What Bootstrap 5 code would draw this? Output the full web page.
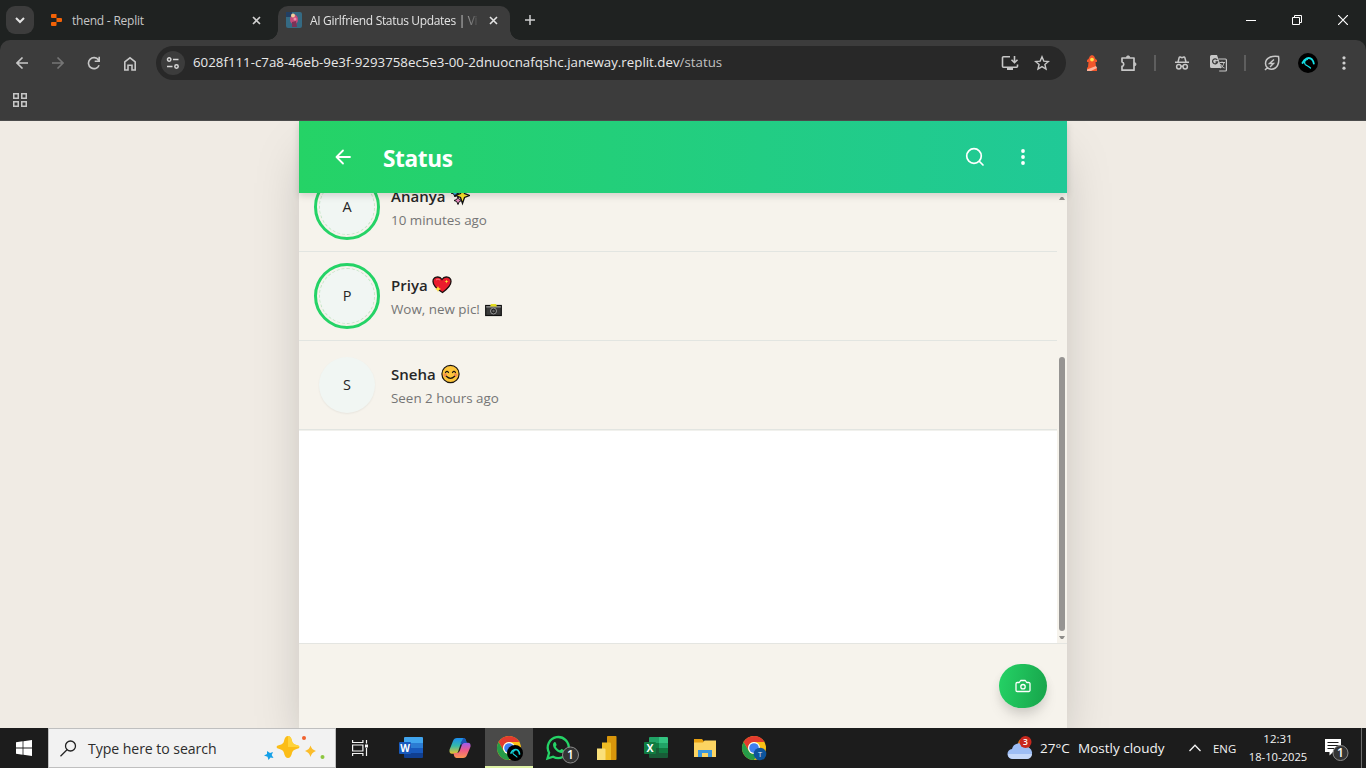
<!DOCTYPE html>
<html lang="en">
<head>
<meta charset="utf-8">
<meta name="viewport" content="width=device-width, initial-scale=1">
<title>AI Girlfriend Status Updates</title>
<link href="https://cdn.jsdelivr.net/npm/bootstrap@5.3.0/dist/css/bootstrap.min.css" rel="stylesheet">
<style>
body{font-family:"Open Sans","Noto Sans",sans-serif;height:768px;background:#f0ebe4;line-height:1}
svg{display:block;flex:none}
.desk{width:1366px;height:768px}
.txt{white-space:nowrap;flex:none}
/* browser chrome */
.tabs{height:40px;background:#1f2221;color:#c7c7c7;font-size:12px;letter-spacing:-.22px}
.tabs-menu{width:28px;height:28px;border-radius:9px;background:#3c3c3c;margin:6px 0 0 6px}
.tab-a{width:236px;height:40px;margin-left:8px;padding-left:9px}
.tab-a .txt{margin-left:9px;padding-top:2px}
.tab-b{width:232px;height:34px;margin-top:6px;padding-bottom:6px;border-radius:10px 10px 0 0;background:#3c3c3c;color:#e3e3e3;position:relative;letter-spacing:-.33px}
.tab-b::before,.tab-b::after{content:"";position:absolute;bottom:0;width:10px;height:10px}
.tab-b::before{left:-10px;background:radial-gradient(circle at 0 0,transparent 9.5px,#3c3c3c 10px)}
.tab-b::after{right:-10px;background:radial-gradient(circle at 100% 0,transparent 9.5px,#3c3c3c 10px)}
.tab-title{width:170px;line-height:18px;padding-top:1px;-webkit-mask-image:linear-gradient(90deg,#000 148px,transparent 170px);mask-image:linear-gradient(90deg,#000 148px,transparent 170px)}
.win{width:46px;height:40px}
.toolbox{background:#1f2221}
.tools{height:81px;background:#3c3c3c;border-radius:10px 10px 0 0;border-bottom:1px solid #4b4b4b;color:#c7c7c7}
.slot{width:36px;height:46px}
.slot-sep{width:18px;height:46px}
.slot-sep i{width:2px;height:16px;background:#5e5e5e}
.url{width:910px;height:34px;margin-top:6px;background:#282828;border-radius:17px;padding-left:5px;color:#e8e8e8}
.url .site{width:24px;height:24px;border-radius:50%;background:#3c3c3c}
.url .addr{font-size:13.3px;margin-left:8px}
/* page */
.stage{height:607px;overflow:hidden;background:#f0ebe4}
.phone{width:768px;height:607px;background:#f6f3ec;box-shadow:0 25px 50px -12px rgba(0,0,0,.25)}
.head{height:72px;background:linear-gradient(90deg,#25d366,#20c997);color:#fff;box-shadow:0 3px 7px rgba(0,0,0,.14);z-index:2;position:relative}
.head .ttl{font-size:22.6px;font-weight:700;margin-left:31px;padding-top:5px;letter-spacing:-.35px}
.feed{height:450px;overflow:hidden;background:#fff}
.person{height:89px;background:#f6f3ec;border-bottom:1px solid #e2e5e1;padding-left:15px}
.person-first{margin-top:-30px}
.person-last{box-shadow:0 1px 0 #f1f1ed}
.ring{width:66px;height:66px;border-radius:50%;border:3px solid transparent}
.ring-new{border-color:#25d366}
.face{width:56px;height:56px;border-radius:50%;background:#f1f6f3;color:#262626;font-size:14.5px;box-shadow:0 1px 2px rgba(0,0,0,.06)}
.ring-new .face{border:1px dashed #c6e6c8;box-shadow:none}
.pname{font-size:15px;font-weight:600;color:#262626;height:24px;padding-top:2px}
.psub{font-size:13.4px;color:#757575;height:24px;padding-top:4px}
.bar{width:10px;background:#f6f3ec}
.thumb{width:6px;height:274px;border-radius:3px;background:#969492}
.foot{height:85px;border-top:1px solid #e4e5e1;padding:20px 20px 0 0}
.fab{width:48px;height:44px;border-radius:24px;background:linear-gradient(100deg,#25d366,#17a34a);box-shadow:0 10px 15px -3px rgba(0,0,0,.12),0 4px 10px rgba(0,0,0,.07)}
/* taskbar */
.taskbar{height:40px;background:#1c1c1c;color:#f3f3f3}
.cell{width:48px;height:40px;margin-right:1px}
.cell-on{background:#4a4a49;border-bottom:2px solid #dff2a6}
.find{width:288px;height:40px;background:#f2f2f2;border:1px solid #bfbfbf;color:#2d2d2d;font-size:14.1px}
.find .txt,.tray>.txt{padding-top:2px}
</style>
</head>
<body>
<div class="desk d-flex flex-column overflow-hidden">

<div class="tabs d-flex">
  <div class="tabs-menu d-flex align-items-center justify-content-center flex-shrink-0"><svg width="10" height="7" fill="none" stroke="#e3e3e3" stroke-width="2"><path d="M1 1l4 4 4-4"/></svg></div>
  <div class="tab-a d-flex align-items-center">
    <svg width="12" height="12" fill="#f26207"><path d="M1 0h4.500v4H1a1 1 0 0 1-1-1V1a1 1 0 0 1 1-1zM5.500 4H10a1 1 0 0 1 1 1v2a1 1 0 0 1-1 1H5.500zM0 9a1 1 0 0 1 1-1h4.500v3a1 1 0 0 1-1 1H1a1 1 0 0 1-1-1z"/></svg>
    <span class="txt">thend - Replit</span>
    <svg class="ms-auto" style="margin-right:17px" width="9" height="9" stroke="#d0d0d0" stroke-width="1.600"><path d="M1 1l7 7M8 1L1 8"/></svg>
  </div>
  <div class="tab-b d-flex align-items-center ps-2">
    <svg width="16" height="16"><rect width="16" height="16" rx="2" fill="#356a83"/><path d="M0 0h6v5H0z" fill="#223f63"/><ellipse cx="8" cy="7.500" rx="4" ry="5" fill="#c44b78"/><circle cx="7" cy="3.500" r="2" fill="#f0cf9e"/><path d="M6 10l4-1 1 6H6z" fill="#7b3257"/><circle cx="9" cy="7" r="1.500" fill="#f08eae"/></svg>
    <div class="tab-title txt ms-2">AI Girlfriend Status Updates | Vi</div>
    <svg class="ms-auto" style="margin-right:12px" width="9" height="9" stroke="#e3e3e3" stroke-width="1.600"><path d="M1 1l7 7M8 1L1 8"/></svg>
  </div>
  <div class="d-flex align-items-center" style="padding-left:15px"><svg width="10" height="10" stroke="#d0d0d0" stroke-width="1.500"><path d="M5 0v10M0 5h10"/></svg></div>
  <div class="d-flex ms-auto">
    <div class="win d-flex align-items-center justify-content-center"><svg width="10" height="1"><path d="M0 0h10v1H0z" fill="#fff"/></svg></div>
    <div class="win d-flex align-items-center justify-content-center"><svg width="10" height="10" fill="none" stroke="#fff"><path d="M.5 2.500h7v7h-7zM2.500 2.500v-2h7v7h-2"/></svg></div>
    <div class="win d-flex align-items-center justify-content-center"><svg width="10" height="10" stroke="#fff" stroke-width="1.200"><path d="M0 0l10 10M10 0L0 10"/></svg></div>
  </div>
</div>

<div class="toolbox">
<div class="tools">
  <div class="d-flex">
    <div class="d-flex ps-1 me-auto">
      <div class="slot d-flex align-items-center justify-content-center"><svg width="12" height="12" fill="none" stroke="#c7c7c7" stroke-width="1.600"><path d="M12 6H1M6.500.5L1 6l5.500 5.500"/></svg></div>
      <div class="slot d-flex align-items-center justify-content-center"><svg width="12" height="12" fill="none" stroke="#757575" stroke-width="1.600"><path d="M0 6h11M5.500.5L11 6l-5.500 5.500"/></svg></div>
      <div class="slot d-flex align-items-center justify-content-center"><svg width="14" height="14" fill="none" stroke="#c7c7c7" stroke-width="1.600"><path d="M12.100 9.200A5.500 5.500 0 1 1 11.500 4M12.200.8v4.500H7.700"/></svg></div>
      <div class="slot d-flex align-items-center justify-content-center"><svg width="14" height="15" fill="none" stroke="#c7c7c7" stroke-width="1.600"><path d="M1.800 14V5.800L7 1.800l5.200 4V14H9V9.200H5V14z"/></svg></div>
    </div>
    <div class="url d-flex align-items-center">
      <div class="site d-flex align-items-center justify-content-center"><svg width="14" height="12" fill="none" stroke="#d6d6d6" stroke-width="1.500"><circle cx="3.200" cy="2.500" r="1.700"/><path d="M7 2.500h5.500M1 9.500h5.500"/><circle cx="10.500" cy="9.500" r="1.700"/></svg></div>
      <div class="addr txt">6028f111-c7a8-46eb-9e3f-9293758ec5e3-00-2dnuocnafqshc.janeway.replit.dev<span style="color:#c0c0c0">/status</span></div>
      <svg class="ms-auto" width="18" height="16" fill="none" stroke="#c7c7c7" stroke-width="1.600"><path d="M9 1.800H2.500a1 1 0 0 0-1 1v8.400a1 1 0 0 0 1 1h13a1 1 0 0 0 1-1V9.500M13.500 1v6M10.500 4.700l3 3 3-3"/><path d="M6 12.500h6V15H6z" fill="#c7c7c7" stroke="none"/></svg>
      <svg style="margin:0 16px 0 15px" width="16" height="16" fill="none" stroke="#c7c7c7" stroke-width="1.400"><path d="M8 1.800l1.800 4.300 4.600.4-3.500 3 1.100 4.500L8 11.600 4 14l1.100-4.500-3.500-3 4.600-.4z"/></svg>
    </div>
    <div class="d-flex ms-2 me-1">
      <div class="slot d-flex align-items-center justify-content-center"><svg width="14" height="16"><path d="M2 16V13l1-1 .5-5H2V5l1.500-1L5 1l2-1 2 1 1.500 3L12 5v2h-1.500l.5 5 1 1v3z" fill="#f2572c"/><path d="M2 14.500l9-3.500 1 2-6 3H2z" fill="#ffb29a"/><circle cx="7" cy="4.600" r="1.900" fill="#ffe14a"/></svg></div>
      <div class="slot d-flex align-items-center justify-content-center"><svg width="17" height="17" fill="none" stroke="#c7c7c7" stroke-width="1.700"><path d="M2 3h12v12.200H2v-3.900a2.200 2.200 0 0 0 0-4.300z" stroke-linejoin="round"/><path d="M6.400 2.500a1.700 1.700 0 0 1 3.400 0zM14.300 7.500a1.700 1.700 0 0 1 0 3.400z" fill="#c7c7c7" stroke-width=".8"/></svg></div>
      <div class="slot-sep d-flex align-items-center justify-content-center"><i></i></div>
      <div class="slot d-flex align-items-center justify-content-center"><svg width="14" height="14" fill="none" stroke="#c7c7c7" stroke-width="1.500"><path d="M0 6.300h14M3 6l1.200-4.500a.8.800 0 0 1 1-.5l1.800.6L8.800 1a.8.800 0 0 1 1 .5L11 6"/><circle cx="3.800" cy="10.700" r="2.200"/><circle cx="10.200" cy="10.700" r="2.200"/><path d="M6 10.300h2"/></svg></div>
      <div class="slot d-flex align-items-center justify-content-center"><svg width="17" height="17"><path d="M1.500 0H7l4.500 13H1.500A1.500 1.500 0 0 1 0 11.500v-10A1.500 1.500 0 0 1 1.500 0z" fill="#c7c7c7"/><path d="M7.200 5A2.500 2.500 0 1 0 7.500 7H5.500" fill="none" stroke="#3c3c3c" stroke-width="1.300"/><path d="M8.500 4h7a.9.900 0 0 1 .9.900v10.200a.9.900 0 0 1-.9.900H9.200" fill="none" stroke="#c7c7c7" stroke-width="1.200"/><path d="M9.500 7.500H15M12 6.500v1M14 7.500c-.5 3-2 4.500-3.500 5.500M10.500 9c1 2 2 3.500 4 4" fill="none" stroke="#c7c7c7"/></svg></div>
      <div class="slot-sep d-flex align-items-center justify-content-center"><i></i></div>
      <div class="slot d-flex align-items-center justify-content-center"><svg width="16" height="16" fill="none" stroke="#c7c7c7" stroke-width="1.500"><path d="M14.500 1.500C9 .5 1.500 2 1.500 8.500a5.700 5.700 0 0 0 6 5.700C14 14.200 15.500 7 14.500 1.500zM3.500 12.500L1 15"/><path d="M10 4.500L5.500 8.500h4L6 12" stroke-width="1.400"/></svg></div>
      <div class="slot d-flex align-items-center justify-content-center"><svg width="20" height="20" fill="none" stroke="#15e2e8" stroke-linecap="round"><circle cx="10" cy="10" r="10" fill="#000" stroke="none"/><path d="M4.500 10C6.500 5.500 11 3.500 14 6.500q1.700 2 1.800 4" stroke-width="1.900"/><path d="M9.500 6.500c-3 .5-3.500 3-2.300 4.800 1 1.200 3.500 1.700 5.300 3.700" stroke-width="1.200"/></svg></div>
      <div class="slot d-flex align-items-center justify-content-center"><svg width="4" height="14" fill="#d0d0d0"><circle cx="2" cy="1.800" r="1.600"/><circle cx="2" cy="7" r="1.600"/><circle cx="2" cy="12.200" r="1.600"/></svg></div>
    </div>
  </div>
  <div style="padding:7px 0 0 13px"><svg width="14" height="14" fill="none" stroke="#c7c7c7" stroke-width="1.500"><path d="M.75.75h4.500v4.500H.75zM8.750.75h4.500v4.500h-4.500zM.75 8.750h4.500v4.500H.75zM8.750 8.750h4.500v4.500h-4.500z"/></svg></div>
</div>
</div>

<main class="stage d-flex justify-content-center">
  <div class="phone">
    <header class="head d-flex align-items-center">
      <svg style="margin-left:36px" width="17" height="16" fill="none" stroke="#fff" stroke-width="1.800" stroke-linecap="round" stroke-linejoin="round"><path d="M15 8H1.500M8 1.500L1.500 8 8 14.500"/></svg>
      <div class="ttl txt">Status</div>
      <svg class="ms-auto" width="20" height="20" fill="none" stroke="#fff" stroke-width="1.700" stroke-linecap="round"><circle cx="9" cy="9" r="7.300"/><path d="M14.500 14.500l3.500 3.500"/></svg>
      <svg style="margin:0 42px 0 36px" width="4" height="16" fill="#fff"><circle cx="2" cy="2" r="1.900"/><circle cx="2" cy="8" r="1.900"/><circle cx="2" cy="14" r="1.900"/></svg>
    </header>
    <div class="feed d-flex">
      <div class="flex-grow-1">
        <div class="person person-first d-flex align-items-center">
          <div class="ring ring-new d-flex align-items-center justify-content-center"><div class="face d-flex align-items-center justify-content-center">A</div></div>
          <div style="margin-left:11px">
            <div class="pname d-flex align-items-center"><span class="txt">Ananya</span><svg style="margin-left:6px" width="19" height="20" stroke="#111"><path d="M4 3l1.300 3L8 7 5.300 8 4 11 2.700 8 0 7l2.700-1z" fill="#35b6ee"/><path d="M7 11l1.300 2.500 2.700 1-2.700 1L7 18.500l-1.300-3-2.700-1 2.700-1z" fill="#e98bc0"/><path d="M11.500 2l2 5.500 5 2-5 2-2 6-2-6-5-2 5-2z" fill="#ffe92e" stroke-width="1.300"/></svg></div>
            <div class="psub d-flex align-items-center"><span class="txt">10 minutes ago</span></div>
          </div>
        </div>
        <div class="person d-flex align-items-center">
          <div class="ring ring-new d-flex align-items-center justify-content-center"><div class="face d-flex align-items-center justify-content-center">P</div></div>
          <div style="margin-left:11px">
            <div class="pname d-flex align-items-center"><span class="txt me-1">Priya</span><svg width="20" height="18"><path d="M10.500 16.500C4 12.500 1 8.500 1 5.500 1 .5 7.500-.5 10 3.500 12.500-.5 19 .5 19 5.500c0 4-3 7-8.500 11z" fill="#eb1c2d" stroke="#1b1010" stroke-width="1.300"/><path d="M14.500 3.500l.5 1.500 1.500.5-1.500.5-.5 1.500-.5-1.500-1.500-.5 1.500-.5zM6 10l.9 2.100 2.100.9-2.100.9L6 16l-.9-2.100L3 13l2.100-.9z" fill="#ffe135"/><path d="M4 4q2-2 4 0" stroke="#fa7a7f" fill="none"/></svg></div>
            <div class="psub d-flex align-items-center"><span class="txt" style="margin-right:5px">Wow, new pic!</span><svg width="17" height="14"><rect x=".7" y="2.500" width="15.600" height="10" fill="#3a3a3a" stroke="#111" stroke-width="1.200"/><path d="M1.200 3.200h14.600v1.300H1.200z" fill="#999"/><path d="M6 1h5l1 2.500H5z" fill="#e3dc1f"/><circle cx="8.500" cy="8" r="3" fill="#222" stroke="#999"/><circle cx="8.500" cy="8" r="1.200" fill="#666"/></svg></div>
          </div>
        </div>
        <div class="person person-last d-flex align-items-center">
          <div class="ring d-flex align-items-center justify-content-center"><div class="face d-flex align-items-center justify-content-center">S</div></div>
          <div style="margin-left:11px">
            <div class="pname d-flex align-items-center"><span class="txt me-1">Sneha</span><svg width="20" height="20" fill="none" stroke="#1b1510"><circle cx="10.500" cy="10" r="8.600" fill="#fdc53a" stroke-width="1.200"/><circle cx="5.300" cy="11" r="1.800" fill="#f58d52" stroke="none"/><circle cx="15.700" cy="11" r="1.800" fill="#f58d52" stroke="none"/><path d="M5.500 8.500q1.500-2.200 3 0M12.500 8.500q1.500-2.200 3 0M6.300 12.300q4.200 4 8.400 0" stroke-width="1.200" stroke-linecap="round"/></svg></div>
            <div class="psub d-flex align-items-center"><span class="txt">Seen 2 hours ago</span></div>
          </div>
        </div>
      </div>
      <div class="bar d-flex flex-column align-items-center flex-shrink-0">
        <svg style="margin-top:4px" width="6" height="3" fill="#8f8d8a"><path d="M2 0h2l2 3H0z"/></svg>
        <div class="thumb" style="margin-top:157px"></div>
        <svg style="margin-top:5px" width="6" height="3" fill="#8f8d8a"><path d="M0 0h6L4 3H2z"/></svg>
      </div>
    </div>
    <div class="foot d-flex justify-content-end">
      <div class="fab d-flex align-items-center justify-content-center"><svg width="16" height="14" fill="none" stroke="#fff" stroke-width="1.300" stroke-linejoin="round"><path d="M5.700 1.500h4.600L11.700 3.500h2.100A1.200 1.200 0 0 1 15 4.700v6.600a1.200 1.200 0 0 1-1.200 1.200H2.200A1.200 1.200 0 0 1 1 11.300V4.700a1.200 1.200 0 0 1 1.200-1.200h2.100z"/><circle cx="8" cy="7.700" r="2.200"/></svg></div>
    </div>
  </div>
</main>

<footer class="taskbar d-flex align-items-center">
  <div class="cell me-0 d-flex align-items-center justify-content-center"><svg width="16" height="16" fill="#fff"><path d="M0 2.200L6.600 1.300V7.600H0zM7.400 1.200L16 0v7.600H7.400zM0 8.400h6.600v6.300L0 13.800zM7.400 8.400H16V16l-8.600-1.200z"/></svg></div>
  <div class="find d-flex align-items-center">
    <svg style="margin-left:11px" width="17" height="17" fill="none" stroke="#222" stroke-width="1.300"><circle cx="10.500" cy="6" r="5"/><path d="M7 9.800L.5 16.300"/></svg>
    <span class="txt" style="margin-left:11px;letter-spacing:-.06px">Type here to search</span>
    <svg class="ms-auto" style="margin-right:9px" width="62" height="26"><path d="M24 1q3 0 4 5 .5 3 4.500 4 3 .5 3 2t-3 2q-4 1-4.500 4-1 5-4 5t-4-5q-.5-3-4.500-4-3-.5-3-2t3-2q4-1 4.500-4 1-5 4-5z" fill="#fbbd18"/><path d="M24 1q3 0 4 5 .5 3 4.500 4 3 .5 3 2H24z" fill="#ffd33b"/><path d="M46.500 10.500q1 4 5.500 5.500-4.500 1.500-5.500 6-1-4.500-5.500-6 4.500-1.500 5.500-5.500z" fill="#fbbd2b"/><path d="M3 16l3 2 3-1-1.300 3L9.500 23l-3-.5L4.500 25l-1-3.300L0 20.500 3 19z" fill="#15a0e8"/><circle cx="40" cy="3" r="2" fill="#f0612e"/><circle cx="58.500" cy="22" r="2" fill="#8cc63f"/></svg>
  </div>
  <div class="cell d-flex align-items-center justify-content-center" style="margin-right:3px"><svg width="16" height="16" fill="none" stroke="#f3f3f3" stroke-width="1.200"><path d="M.6 0v2.500h10.300V0M.6 5h10.300v6H.6zM.6 16v-2.500h10.300V16M14.500 0v3.500M14.500 8v8"/><path d="M13 4.500h3v3h-3z" fill="#f3f3f3" stroke="none"/></svg></div>
  <div class="cell d-flex align-items-center justify-content-center"><svg width="24" height="22"><path d="M6 0h17a1 1 0 0 1 1 1v5H5V1a1 1 0 0 1 1-1z" fill="#41a5ee"/><path d="M5 6h19v5H5z" fill="#2b7cd3"/><path d="M5 11h19v5H5z" fill="#185abd"/><path d="M5 16h19v4a1 1 0 0 1-1 1H6a1 1 0 0 1-1-1z" fill="#103f91"/><rect y="5" width="12" height="12" rx="1" fill="#185abd"/><text x="6" y="14.500" text-anchor="middle" font-size="10" font-weight="700" fill="#fff">W</text></svg></div>
  <div class="cell d-flex align-items-center justify-content-center"><svg width="22" height="22"><defs><linearGradient id="cp1" x1="0" y1="0" x2="0" y2="1"><stop stop-color="#1b8df0"/><stop offset=".5" stop-color="#35b9a8"/><stop offset="1" stop-color="#e9c32f"/></linearGradient><linearGradient id="cp2" x1="0" y1="0" x2="0" y2="1"><stop stop-color="#9b5cf0"/><stop offset=".5" stop-color="#ee5b86"/><stop offset="1" stop-color="#fb9650"/></linearGradient></defs><path d="M8 1h6.500a3 3 0 0 1 2.500 2.500L17.500 6H14a3 3 0 0 0-2.800 2.200L9 15q-.7 1.700-2.500 1.700H3q-3 0-2.500-4L4 4Q5 1 8 1z" fill="url(#cp1)"/><path d="M14 21H7.500a3 3 0 0 1-2.500-2.500L4.500 16H8a3 3 0 0 0 2.800-2.200L13 7.500q.7-1.700 2.500-1.700H19q3 0 2.500 4L18 18q-1 3-4 3z" fill="url(#cp2)"/><path d="M14.500 1q2 .4 2.500 2.500l.8 2.400h-2.500q-2 .1-2.700 2L11.500 6z" fill="#1c54b4"/></svg></div>
  <div class="cell cell-on d-flex align-items-center justify-content-center"><svg width="27" height="27" viewBox="0 0 27 27"><circle cx="13" cy="14" r="12" fill="#fbc116"/><path d="M2.600 8A12 12 0 0 1 23.400 8H13a6 6 0 0 0-5.200 9z" fill="#e33b2e"/><path d="M2.600 8A12 12 0 0 0 13 26l5.200-9a6 6 0 0 1-10.400 0z" fill="#269b48"/><circle cx="13" cy="14" r="6" fill="#fff"/><circle cx="13" cy="14" r="4.800" fill="#3f7ff0"/><circle cx="19" cy="19" r="8" fill="#000"/><g fill="none" stroke="#15d2d8" stroke-linecap="round"><path d="M15 19c1.500-3.500 5-4.500 7.200-2.300q1.300 1.500 1.300 3.300" stroke-width="1.700"/><path d="M19 16.500c-2.300.5-2.700 2.500-1.500 3.700 1 .8 2.500 1.300 3.500 2.800" stroke-width="1.100"/></g></svg></div>
  <div class="cell d-flex align-items-center justify-content-center"><svg class="overflow-visible" width="24" height="24"><path d="M1.500 22.500l1.600-5.800a10.500 10.500 0 1 1 4 4z" fill="none" stroke="#25d366" stroke-width="2.300"/><path d="M8 6.500c.8-.8 1.500-.5 1.800.2l.8 2c.2.800-1 1.500-.8 2 .8 1.600 2.200 2.800 4 3.500.6 0 1.200-1.500 1.900-1.300l2.200 1.100c1 1-.8 3-2.300 3C12 17 7 12.500 7 9c0-1 .4-2 1-2.500z" fill="#25d366"/><circle cx="24.500" cy="19" r="8" fill="#343434" stroke="#8b8b8b"/><text x="24.500" y="23.300" text-anchor="middle" font-size="12" font-weight="600" fill="#fff">1</text></svg></div>
  <div class="cell d-flex align-items-center justify-content-center"><svg width="20" height="24"><rect x="10" width="9.500" height="24" rx=".7" fill="#d9960b"/><path d="M5 6.500h8q1 0 1 1V24H5z" fill="#f0bd25"/><path d="M0 12.500h7.500q1 0 1 1V24H0z" fill="#fae07a"/></svg></div>
  <div class="cell d-flex align-items-center justify-content-center"><svg width="24" height="22"><path d="M6 0h9v6H5V1a1 1 0 0 1 1-1z" fill="#21a366"/><path d="M15 0h8a1 1 0 0 1 1 1v5h-9z" fill="#33c481"/><path d="M5 6h10v5H5z" fill="#107c41"/><path d="M15 6h9v5h-9z" fill="#21a366"/><path d="M5 11h19v9a1 1 0 0 1-1 1H6a1 1 0 0 1-1-1z" fill="#185c37"/><path d="M15 11h9v5h-9z" fill="#107c41"/><rect y="5" width="12" height="12" rx="1" fill="#107c41"/><text x="6" y="14.700" text-anchor="middle" font-size="10.500" font-weight="700" fill="#fff">X</text></svg></div>
  <div class="cell d-flex align-items-center justify-content-center"><svg width="22" height="20"><path d="M0 1h8l2 2.500V8H0z" fill="#e8a010"/><path d="M0 4.500h9l1.500-2H22V19H0z" fill="#fcd462"/><path d="M4 19v-7h14v7h-4v-4H8v4z" fill="#3a96dd"/></svg></div>
  <div class="cell d-flex align-items-center justify-content-center"><svg width="26" height="26" viewBox="0 0 26 26"><circle cx="13" cy="13" r="12" fill="#fbc116"/><path d="M2.600 7A12 12 0 0 1 23.400 7H13a6 6 0 0 0-5.200 9z" fill="#e33b2e"/><path d="M2.600 7A12 12 0 0 0 13 25l5.200-9a6 6 0 0 1-10.400 0z" fill="#269b48"/><circle cx="13" cy="13" r="6" fill="#fff"/><circle cx="13" cy="13" r="4.800" fill="#3f7ff0"/><circle cx="19" cy="19" r="6.300" fill="#0d549c"/><text x="19" y="21.800" text-anchor="middle" font-size="7.500" fill="#dfe9f5">T</text></svg></div>
  <div class="tray d-flex align-items-center ms-auto">
    <svg width="26" height="26"><circle cx="17" cy="9" r="6" fill="#f28a1c"/><path d="M6 24a5 5 0 0 1-1-10 7 7 0 0 1 13-2 6 6 0 0 1 2 12z" fill="#9dbdf5"/><path d="M1 19h24a5.500 5.500 0 0 1-5 5H6a5 5 0 0 1-5-5z" fill="#c5d8fa"/><circle cx="18.500" cy="7" r="6" fill="#c8281e"/><text x="18.500" y="10" text-anchor="middle" font-size="8.500" font-weight="600" fill="#fff">3</text></svg>
    <span class="txt" style="margin-left:7px;font-size:13.500px;width:38px">27°C</span>
    <span class="txt" style="font-size:13.500px;width:111px">Mostly cloudy</span>
    <svg width="12" height="8" fill="none" stroke="#f3f3f3" stroke-width="1.300"><path d="M.5 7L6 1.200 11.500 7"/></svg>
    <span class="txt" style="margin-left:12px;font-size:11.400px;width:34px">ENG</span>
    <div class="text-center" style="width:62px;font-size:11.200px;line-height:18px"><div style="font-size:11.500px">12:31</div><div class="txt">18-10-2025</div></div>
    <svg style="margin-left:15px" width="26" height="26"><path d="M1 4h16v13H9l-3.500 3.500V17H1z" fill="#fff"/><path d="M3.500 7.500h11M3.500 10.500h11M3.500 13.500h7" stroke="#1c1c1c" stroke-width="1.200"/><circle cx="16.500" cy="19" r="6.500" fill="#343434"/><circle cx="16.500" cy="18" r="7.500" fill="#343434" stroke="#8b8b8b"/><text x="16.500" y="22.300" text-anchor="middle" font-size="12" font-weight="600" fill="#fff">1</text></svg>
    <div style="width:1px;height:40px;margin:0 4px 0 11px;background:#6d6d6d"></div>
  </div>
</footer>
</div>
<script src="https://cdn.jsdelivr.net/npm/bootstrap@5.3.0/dist/js/bootstrap.bundle.min.js"></script>
</body>
</html>
